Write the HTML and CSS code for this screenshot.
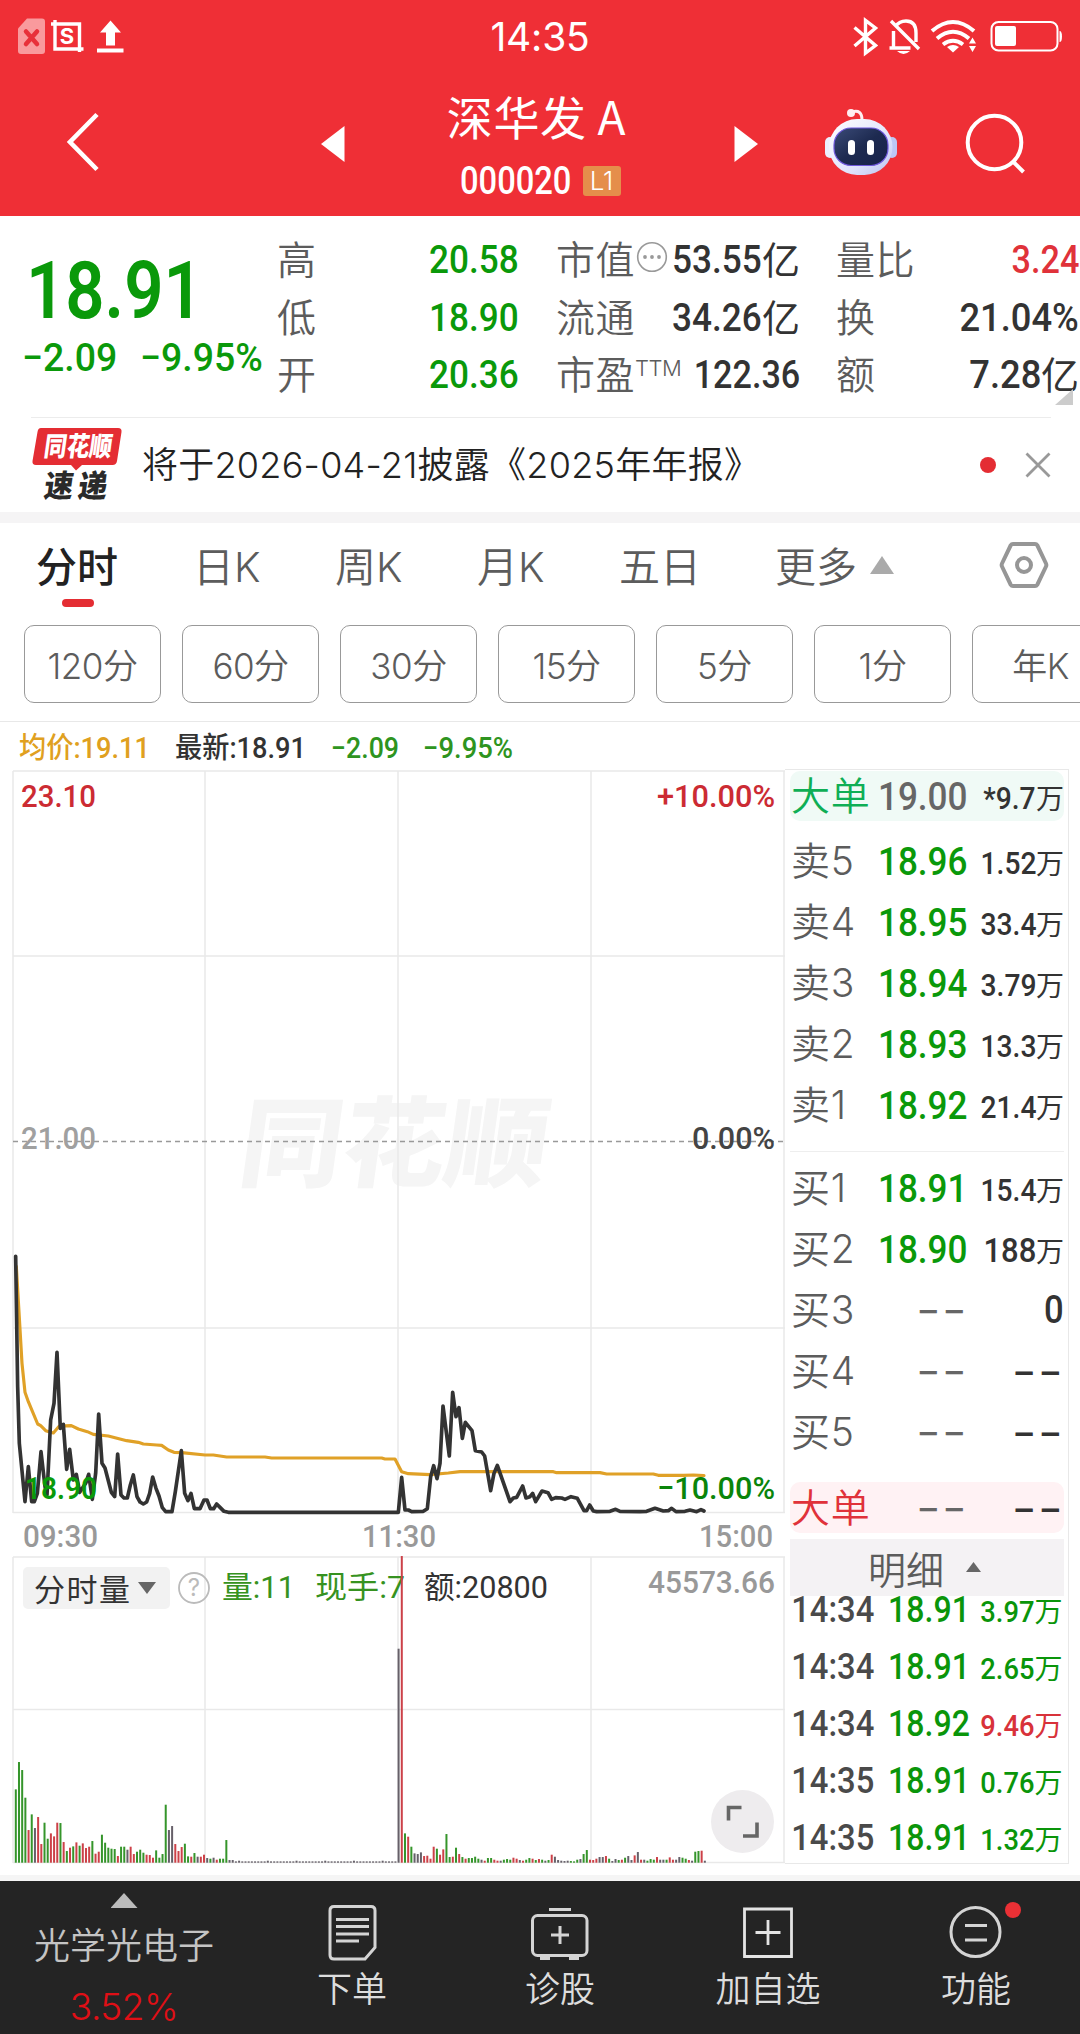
FILE: index.html
```html
<!DOCTYPE html>
<html lang="zh-CN">
<head>
<meta charset="utf-8">
<title>深华发A 000020</title>
<link rel="stylesheet" href="styles.css">
</head>
<body>
<header class="header">
  <div class="status">
    <svg class="status-left" width="110" height="40" viewBox="16 17 110 40">
      <path d="M27 18.500H42Q45 18.500 45 21.500V51Q45 54 42 54H21Q18 54 18 51V28.500Z" fill="#f99a9d"/>
      <path d="M26 31.500l11 12.500M37 31.500l-11 12.500" stroke="#e8303a" stroke-width="4.500" stroke-linecap="round"/>
      <path d="M51 24h28.500v28M55 20v29h28.500" fill="none" stroke="#fff" stroke-width="3.400"/>
      <text x="67" y="44" text-anchor="middle" class="crop-s">S</text>
      <path d="M110.500 20.500L121 32.500h-6V45.500h-9V32.500h-6ZM97 48.500h26.500v4H97z" fill="#fff"/>
    </svg>
    <span class="clock">14:35</span>
    <svg class="status-right" width="212" height="40" viewBox="852 17 212 40" fill="none" stroke="#fff" stroke-width="3.400">
      <path d="M854.500 27.500L875.500 45.500 865.500 53V20.500L875.500 28 854.500 46"/>
      <path d="M895 27q4-6 11-6 10 0 10 12v9M893.500 31v16M889.500 48h21M891 21l28 28"/>
      <path d="M897 51h13q-6.500 6-13 0z" fill="#fff" stroke="none"/>
      <path d="M932 31Q953 13 974 31M937 38.500Q953 25 969 38.500M943 44.500Q953 37 963 44.500" stroke-width="4"/>
      <path d="M947 47q6-4 12 0l-6 5.500zM969 43.500l3.500-6 3.500 6zM969 46l3.500 6 3.500-6z" fill="#fff" stroke="none"/>
      <rect x="991.500" y="22" width="66" height="28.500" rx="7" stroke-width="2"/>
      <rect x="995" y="26" width="21" height="20" rx="2" fill="#fff" stroke="none"/>
      <path d="M1059.500 31q2.500 0 2.500 5.500t-2.500 5.500z" fill="#fff" stroke="none"/>
    </svg>
  </div>
  <div class="titlebar">
    <svg class="back" width="36" height="60" viewBox="0 0 36 60" fill="none" stroke="#fff" stroke-width="4.600"><path d="M31 2.500L4 30l27 27.500"/></svg>
    <svg class="prev" width="26" height="38" viewBox="0 0 26 38"><path d="M1 19L24.500 1v36z" fill="#fff"/></svg>
    <div class="name-block">
      <h1 class="stock-name">深华发 A</h1>
      <div class="stock-code"><span class="code">000020</span><span class="level">L1</span></div>
    </div>
    <svg class="next" width="26" height="38" viewBox="0 0 26 38"><path d="M25 19L1.500 1v36z" fill="#fff"/></svg>
    <svg class="robot" width="74" height="70" viewBox="824 106 74 70">
      <defs>
        <linearGradient id="shell" x1="0" y1="0" x2="1" y2="1"><stop offset="0" stop-color="#fff"/><stop offset=".65" stop-color="#dfe2fb"/><stop offset="1" stop-color="#b9c2f0"/></linearGradient>
        <linearGradient id="visor" x1="0" y1="0" x2="1" y2="1"><stop offset="0" stop-color="#3b4b78"/><stop offset=".5" stop-color="#1d2a50"/><stop offset="1" stop-color="#18224a"/></linearGradient>
      </defs>
      <circle cx="851" cy="112" r="4" fill="#ffeef2"/>
      <path d="M852 111q10-3 10 8" fill="none" stroke="#ffeef2" stroke-width="3"/>
      <rect x="825" y="136" width="10" height="21" rx="5" fill="#eceffe"/>
      <rect x="887" y="136" width="10" height="21" rx="5" fill="#bcc6f5"/>
      <rect x="829" y="118" width="63.500" height="56" rx="28" fill="url(#shell)"/>
      <rect x="834" y="127" width="54" height="37.500" rx="17" fill="url(#visor)" stroke="#6f58dc" stroke-width="1.200"/>
      <rect x="848" y="139" width="7" height="15" rx="3.500" fill="#fff"/>
      <rect x="867" y="139" width="7" height="15" rx="3.500" fill="#fff"/>
    </svg>
    <svg class="search" width="62" height="64" viewBox="964 112 62 64" fill="none" stroke="#fff" stroke-width="4"><circle cx="994.500" cy="142.500" r="26.800"/><path d="M1013 161.500l10.500 10.500"/></svg>
  </div>
</header>

<section class="quote">
  <div class="quote-main">
    <div class="price"><span class="num">18.91</span></div>
    <div class="change"><span class="num">−2.09</span><span class="num">−9.95%</span></div>
  </div>
  <dl class="stats">
    <dt>高</dt><dd class="green"><span class="num">20.58</span></dd>
    <dt>低</dt><dd class="green"><span class="num">18.90</span></dd>
    <dt>开</dt><dd class="green"><span class="num">20.36</span></dd>
  </dl>
  <dl class="stats stats-mid">
    <dt>市值<svg class="more-dot" width="32" height="32" viewBox="0 0 32 32"><circle cx="16" cy="16" r="14.300" fill="none" stroke="#999" stroke-width="1.600"/><g fill="#999"><circle cx="9" cy="16" r="1.900"/><circle cx="16" cy="16" r="1.900"/><circle cx="23" cy="16" r="1.900"/></g></svg></dt><dd><span class="num">53.55</span>亿</dd>
    <dt>流通</dt><dd><span class="num">34.26</span>亿</dd>
    <dt>市盈<sup>TTM</sup></dt><dd><span class="num tight">122.36</span></dd>
  </dl>
  <dl class="stats stats-last">
    <dt>量比</dt><dd class="red"><span class="num tight">3.24</span></dd>
    <dt>换</dt><dd><span class="num">21.04%</span></dd>
    <dt>额</dt><dd><span class="num">7.28</span>亿</dd>
  </dl>
  <i class="corner"></i>
</section>

<section class="notice">
  <svg class="flash-logo" width="92" height="76" viewBox="31 426 92 76">
    <path d="M41 428h77q4 0 3.500 4l-4.500 29q-.600 4-4.500 4H82l-6 5.500-5-5.500H36q-4 0-3.500-4l5-29q.500-4 3.500-4z" fill="#e42d33"/>
    <text transform="translate(43 456) skewX(-8)" class="logo-a" textLength="68" lengthAdjust="spacingAndGlyphs">同花顺</text>
    <text transform="translate(43 497) skewX(-8)" class="logo-b" textLength="29" lengthAdjust="spacingAndGlyphs">速</text>
    <text transform="translate(77 497) skewX(-8)" class="logo-b" textLength="29" lengthAdjust="spacingAndGlyphs">递</text>
  </svg>
  <p class="notice-text">将于2026-04-21披露《2025年年报》</p>
  <i class="dot"></i>
  <svg class="close" width="26" height="26" viewBox="0 0 26 26" stroke="#999" stroke-width="2.800"><path d="M1.500 1.500l23 23M24.500 1.500l-23 23"/></svg>
</section>

<nav class="tabs">
  <a class="tab active">分时</a><a class="tab">日K</a><a class="tab">周K</a><a class="tab">月K</a><a class="tab">五日</a><a class="tab">更多<i class="up"></i></a>
  <svg class="gear" width="50" height="48" viewBox="0 0 50 48" fill="none" stroke="#969696" stroke-width="4"><path d="M14 3h22q1.500 0 2.300 1.300L47 22.500q.700 1.500 0 3L38.300 43.700Q37.500 45 36 45H14q-1.500 0-2.300-1.300L3 25.500q-.700-1.500 0-3L11.700 4.300Q12.500 3 14 3z"/><circle cx="25" cy="24" r="7"/></svg>
</nav>
<div class="periods">
  <span>120分</span><span>60分</span><span>30分</span><span>15分</span><span>5分</span><span>1分</span><span>年K</span>
</div>

<div class="legend">
  <svg width="520" height="44" viewBox="0 724 520 44">
    <g class="lg">
      <text x="19" y="758" textLength="131" lengthAdjust="spacingAndGlyphs" fill="#e0a020">均价:19.11</text>
      <text x="175" y="758" textLength="131" lengthAdjust="spacingAndGlyphs" fill="#333">最新:18.91</text>
      <text x="331" y="758" textLength="68" lengthAdjust="spacingAndGlyphs" fill="#2e9420">−2.09</text>
      <text x="423" y="758" textLength="90" lengthAdjust="spacingAndGlyphs" fill="#2e9420">−9.95%</text>
    </g>
  </svg>
</div>

<main class="board">
  <div class="charts">
    <svg class="chart" width="785" height="1099" viewBox="0 768 785 1099">
      <g class="watermark"><text transform="translate(236 1179) skewX(-8)" textLength="308" lengthAdjust="spacingAndGlyphs">同花顺</text></g>
      <g fill="none" stroke="#e9e9e9" stroke-width="1.500">
        <path d="M13 771H785M13 956H785M13 1328H785M13 1512.500H785M13 771V1513M205 771V1513M398 771V1513M591 771V1513M784 771V1513"/>
        <path d="M13 1557H785M13 1709.500H785M13 1862.500H785M13 1557V1863M205 1557V1863M398 1557V1863M591 1557V1863M784 1557V1863"/>
      </g>
      <path d="M13 1141.500H784" stroke="#999" stroke-width="1.600" stroke-dasharray="5 4"/>
      <g class="axis">
        <text x="21" y="807" textLength="75" lengthAdjust="spacingAndGlyphs" fill="#cc2b33">23.10</text>
        <text x="657" y="807" textLength="118" lengthAdjust="spacingAndGlyphs" fill="#cc2b33">+10.00%</text>
        <text x="21" y="1149" textLength="75" lengthAdjust="spacingAndGlyphs" fill="#a0a0a0">21.00</text>
        <text x="692" y="1149" textLength="83" lengthAdjust="spacingAndGlyphs" fill="#444">0.00%</text>
      </g>
      <g transform="translate(0 1230) scale(.33333)" fill="none" stroke-linejoin="round" stroke-linecap="round">
        <polyline stroke="#e0a127" stroke-width="9.500" points="49,110 56,230 66,400 75,487 85,515 113,582 122,587 137,602 160,609 178,588 214,587 235,597 262,605 280,613 325,618 380,632 415,637 430,642 470,645 485,646 505,660 522,667 545,668 615,675 640,675 680,681 795,681 815,684 1145,684 1155,687 1185,687 1205,725 1225,731 1290,734 1345,729 1380,725 1660,725 1670,728 1800,728 1820,732 1960,732 1975,736 2050,736 2080,735 2112,737"/>
        <polyline stroke="#333" stroke-width="11" points="47,79 53,470 58,640 75,815 85,710 95,815 103,815 112,790 123,665 135,770 141,795 152,570 162,520 171,367 181,595 190,583 200,718 209,658 220,750 229,733 239,787 257,760 266,733 277,808 287,730 296,552 306,700 315,714 334,787 344,800 353,672 363,795 372,804 382,804 391,765 400,735 411,800 420,816 430,822 440,816 449,790 458,741 468,775 477,798 487,833 497,845 516,845 526,785 544,662 554,790 564,812 573,790 583,836 600,836 612,810 621,810 631,836 641,836 650,822 660,832 672,844 685,847 1195,847 1205,742 1215,840 1225,840 1235,845 1270,844 1282,836 1292,740 1301,707 1311,746 1320,700 1329,528 1348,678 1358,487 1368,560 1377,533 1387,625 1396,577 1416,602 1426,662 1445,666 1454,678 1472,782 1482,730 1492,706 1530,815 1540,804 1550,802 1568,768 1578,804 1590,800 1598,790 1607,815 1626,783 1644,788 1655,808 1667,803 1685,804 1695,808 1713,800 1732,805 1752,842 1760,842 1769,825 1780,843 1790,845 1830,844 1847,838 1860,844 1920,845 1940,844 1965,835 1990,843 2005,842 2015,835 2028,845 2055,844 2070,840 2090,845 2103,839 2112,843"/>
      </g>
      <g class="axis">
        <text x="25" y="1499" textLength="72" lengthAdjust="spacingAndGlyphs" class="low" fill="#0a9a0a">18.90</text>
        <text x="657" y="1499" textLength="118" lengthAdjust="spacingAndGlyphs" fill="#0a850a">−10.00%</text>
        <g fill="#999">
          <text x="23" y="1547" textLength="75" lengthAdjust="spacingAndGlyphs">09:30</text>
          <text x="362" y="1547" textLength="74" lengthAdjust="spacingAndGlyphs">11:30</text>
          <text x="699" y="1547" textLength="74" lengthAdjust="spacingAndGlyphs">15:00</text>
          <text x="648" y="1593" textLength="127" lengthAdjust="spacingAndGlyphs">45573.66</text>
        </g>
      </g>
      <rect x="23" y="1567" width="147" height="42" rx="5" fill="#f2f2f2"/>
      <path d="M138 1582h18l-9 12z" fill="#666"/>
      <circle cx="194" cy="1588" r="15" fill="none" stroke="#bbb" stroke-width="1.800"/>
      <text x="194" y="1596" text-anchor="middle" class="help">?</text>
      <g class="vol-text">
        <text x="34" y="1601" textLength="96" fill="#333">分时量</text>
        <text x="222" y="1598" textLength="73" lengthAdjust="spacingAndGlyphs" fill="#369220">量:11</text>
        <text x="315" y="1598" textLength="90" lengthAdjust="spacingAndGlyphs" fill="#369220">现手:7</text>
        <text x="424" y="1598" textLength="124" lengthAdjust="spacingAndGlyphs" fill="#333">额:20800</text>
      </g>
      <g id="volume-bars"></g>
      <circle cx="742.500" cy="1821.500" r="31.500" fill="#eeecee"/>
      <path d="M741.500 1807.500h-13V1820.500M743 1836h14v-13.500" fill="none" stroke="#666" stroke-width="3.600"/>
    </svg>
  </div>

  <aside class="book">
    <div class="row big sell-big"><span class="lab">大单</span><span class="px grey"><b class="num">19.00</b></span><span class="qty"><b class="num">*9.7</b>万</span></div>
    <div class="group">
      <div class="row"><span class="lab">卖5</span><span class="px"><b class="num">18.96</b></span><span class="qty"><b class="num">1.52</b>万</span></div>
      <div class="row"><span class="lab">卖4</span><span class="px"><b class="num">18.95</b></span><span class="qty"><b class="num">33.4</b>万</span></div>
      <div class="row"><span class="lab">卖3</span><span class="px"><b class="num">18.94</b></span><span class="qty"><b class="num">3.79</b>万</span></div>
      <div class="row"><span class="lab">卖2</span><span class="px"><b class="num">18.93</b></span><span class="qty"><b class="num">13.3</b>万</span></div>
      <div class="row"><span class="lab">卖1</span><span class="px"><b class="num">18.92</b></span><span class="qty"><b class="num">21.4</b>万</span></div>
    </div>
    <div class="group buys">
      <div class="row"><span class="lab">买1</span><span class="px"><b class="num">18.91</b></span><span class="qty"><b class="num">15.4</b>万</span></div>
      <div class="row"><span class="lab">买2</span><span class="px"><b class="num">18.90</b></span><span class="qty whole"><b class="num">188</b>万</span></div>
      <div class="row"><span class="lab">买3</span><span class="px none">--</span><span class="qty zero"><b class="num">0</b></span></div>
      <div class="row"><span class="lab">买4</span><span class="px none">--</span><span class="qty none">--</span></div>
      <div class="row"><span class="lab">买5</span><span class="px none">--</span><span class="qty none">--</span></div>
    </div>
    <div class="row big buy-big"><span class="lab">大单</span><span class="px none">--</span><span class="qty none">--</span></div>
    <div class="detail-head">明细<i></i></div>
    <div class="trades">
      <div class="trade"><b class="num t">14:34</b><b class="num p">18.91</b><span class="q"><b class="num">3.97</b>万</span></div>
      <div class="trade"><b class="num t">14:34</b><b class="num p">18.91</b><span class="q"><b class="num">2.65</b>万</span></div>
      <div class="trade"><b class="num t">14:34</b><b class="num p">18.92</b><span class="q red"><b class="num">9.46</b>万</span></div>
      <div class="trade"><b class="num t">14:35</b><b class="num p">18.91</b><span class="q"><b class="num">0.76</b>万</span></div>
      <div class="trade"><b class="num t">14:35</b><b class="num p">18.91</b><span class="q"><b class="num">1.32</b>万</span></div>
    </div>
  </aside>
</main>

<footer class="bottom">
  <div class="sector"><i></i><span>光学光电子</span><b>3.52%</b></div>
  <div class="item"><svg width="60" height="60" viewBox="322 1903 60 60" fill="none" stroke="#d4d4d4" stroke-width="3"><path d="M334 1906.500h37q4 0 4 4v37l-10 11.500h-31q-4 0-4-4v-44.500q0-4 4-4z"/><path d="M336 1919.500h33M336 1926.500h33M336 1934h33M336 1941h23"/></svg><span>下单</span></div>
  <div class="item"><svg width="60" height="60" viewBox="530 1903 60 60" fill="none" stroke="#d4d4d4" stroke-width="3"><rect x="532.500" y="1915.500" width="54.500" height="40" rx="5"/><path d="M549 1909.500h22M560 1926v18M551 1935h18M540 1958.500h10M569 1958.500h10"/></svg><span>诊股</span></div>
  <div class="item"><svg width="60" height="60" viewBox="737 1903 60 60" fill="none" stroke="#e4e4e4" stroke-width="2.800"><path d="M743.500 1909h47v47.500h-47zM767 1920v25M754.500 1932.500h25"/></svg><span>加自选</span></div>
  <div class="item"><svg width="80" height="60" viewBox="936 1900 80 60" fill="none" stroke="#d4d4d4" stroke-width="3"><circle cx="975.500" cy="1932" r="24.500"/><path d="M965 1925.500h22M965 1940h22"/></svg><i class="badge"></i><span>功能</span></div>
</footer>
<script src="volume.js"></script>
</body>
</html>
```
FILE: volume.js
```javascript
// One bar per trading minute: height in thirds of a pixel, colour by direction.
const heights = [220,302,278,195,98,145,104,137,56,120,72,88,79,120,119,62,35,45,49,61,51,58,44,48,65,27,33,84,60,45,42,41,20,48,48,39,48,26,33,39,30,24,23,15,37,15,26,174,98,110,56,35,47,57,19,18,29,18,18,24,14,12,15,9,12,12,68,8,8];
while (heights.length < 120) heights.push(heights.length % 9 === 7 ? 6 : 4);
heights.push(642, 920, 88, 78, 48, 28, 26, 31, 20, 21, 12, 48, 42, 24, 40, 86, 17, 18, 45, 26, 17, 12, 14, 14, 18, 12, 9, 6, 14, 14, 9, 6, 6, 9, 11, 9, 15, 12, 8, 6, 9, 14, 12, 8, 11, 9, 6, 8, 24, 18, 8, 6, 5, 6, 5, 4, 9, 11, 26, 38, 9, 8, 12, 17, 17, 20, 12, 5, 11, 8, 9, 15, 20, 8, 22, 32, 9, 9, 6, 11, 9, 17, 9, 9, 9, 16, 9, 9, 17, 15, 12, 8, 6, 33, 35, 36, 6);
const morning = 'ggggrgkrrggrrrgrgrgrgrrrgrrgggggrggkrrgggrrrgggg' + 'kkrrrggrgkrrkgkrgggkk' + 'k'.repeat(52);
const afternoon = 'rgrgkkkrrrrgrrggrgrgrggggkrggrrkgggrrkrggrgrgkgrkkkkkgggkggrrrkkrgkkgrgkkrkrkgggrkkgrrkkggrk';
const dirs = morning + afternoon.padEnd(92, 'k').slice(0, 92) + 'ggrk';
const colors = { g: '#35952b', r: '#cc4148', k: '#666069' };
const layer = document.getElementById('volume-bars');
heights.forEach((h, i) => {
  const bar = document.createElementNS('http://www.w3.org/2000/svg', 'rect');
  bar.setAttribute('x', (14.8 + i * 3.19).toFixed(2));
  bar.setAttribute('y', (1862.700 - h / 3).toFixed(2));
  bar.setAttribute('width', '2');
  bar.setAttribute('height', (h / 3).toFixed(2));
  bar.setAttribute('fill', colors[dirs[i]]);
  layer.appendChild(bar);
});
```
FILE: styles.css
```css
* { box-sizing: border-box; margin: 0; padding: 0; }
body { width: 1080px; height: 2034px; overflow: hidden; background: #fff; color: #333; font-family: "Noto Sans CJK SC", sans-serif; }
svg { display: block; flex: none; }
i { font-style: normal; }
b { font-weight: 500; }
.num { display: inline-block; font-family: Roboto, sans-serif; font-weight: 500; transform: scaleX(.89); transform-origin: right center; white-space: pre; }
.green { color: #0a990a; }
.red { color: #e0323a; }

.header { height: 216px; background: #ef2f36; color: #fff; }
.status { display: flex; align-items: center; justify-content: space-between; height: 74px; padding: 0 16px; }
.status-left { margin-right: 102px; }
.clock { font: 400 39px/40px Inter, sans-serif; letter-spacing: -.2px; }
.crop-s { font: 700 22px Inter, sans-serif; fill: #fff; }
.titlebar { display: flex; align-items: center; height: 142px; }
.back { margin: -6px 0 0 66px; }
.prev { margin: -3px 0 0 218px; }
.name-block { width: 388px; height: 142px; padding-top: 10px; text-align: center; }
.stock-name { font-size: 46px; line-height: 62px; font-weight: 400; letter-spacing: .6px; padding-right: 7px; }
.stock-code { display: flex; align-items: center; justify-content: center; height: 38px; margin-top: 16px; padding-right: 0; }
.code { font: 500 38px/38px Roboto, sans-serif; width: 110px; transform: scaleX(.86); transform-origin: left center; }
.level { width: 38px; height: 30px; margin-left: 13px; border-radius: 3px; background: #e58e4b; font: 300 26px/30px Inter, sans-serif; }
.next { margin: -3px 0 0 -1px; }
.robot { margin: -7px 0 0 65px; }
.search { margin: -2px 0 0 66px; }

.quote { position: relative; display: flex; height: 201px; padding-top: 13px; }
.quote-main { width: 277px; color: #0a990a; }
.price { height: 102px; padding: 30px 0 0 26px; }
.price .num { font-size: 80px; line-height: 64px; font-weight: 600; transform: scaleX(.86); }
.price .num, .change .num { transform-origin: left center; }
.change { display: flex; padding: 7px 0 0 22px; font-size: 39px; line-height: 40px; }
.change .num { transform: scaleX(.96); }
.change .num:first-child { width: 118px; }
.stats { display: grid; grid-template-columns: auto minmax(0, 1fr); grid-auto-rows: 57.5px; width: 242px; align-content: start; line-height: 57px; }
.stats dt { display: flex; font-size: 39px; font-weight: 350; color: #5c5c5c; letter-spacing: .5px; white-space: nowrap; }
.stats dd { display: flex; justify-content: flex-end; font-size: 38px; white-space: nowrap; }
.stats .num { font-size: 39.500px; padding-top: 2px; }
.stats-mid { width: 244px; margin-left: 37px; }
.stats-last { width: 243px; margin-left: 36px; }
.stats-last .num { transform: scaleX(.92); }
.stats .num.tight { transform: scaleX(.865); }
.stats sup { font: 300 22px/22px Inter, sans-serif; margin-top: 13px; letter-spacing: -.5px; }
.more-dot { margin: 12px 0 0 1px; }
.corner { position: absolute; right: 7px; top: 173px; width: 18px; height: 16px; background: #ccc; clip-path: polygon(100% 0, 100% 100%, 0 100%); }

.notice { display: flex; align-items: center; height: 95px; margin-left: 31px; margin-right: 29px; border-top: 1.500px solid #ececec; }
.flash-logo { margin-top: -2px; }
.logo-a { font: 900 27px "Noto Sans CJK SC", sans-serif; fill: #fff; }
.logo-b { font: 900 31px "Noto Sans CJK SC", sans-serif; fill: #2a2a2a; }
.notice-text { flex: 1; margin-left: 19px; font: 350 36px/50px Inter, "Noto Sans CJK SC", sans-serif; letter-spacing: .25px; white-space: nowrap; color: #222; }
.dot { width: 16px; height: 16px; border-radius: 50%; background: #e42d33; margin-right: 29px; }

.tabs { display: flex; height: 112px; border-top: 11px solid #f5f4f5; padding-left: 36px; font: 350 41px/88px Inter, "Noto Sans CJK SC", sans-serif; color: #5c5c5c; white-space: nowrap; }
.tab { position: relative; width: 142px; }
.tab:nth-child(1) { width: 157px; }
.tab.active { color: #222; font-weight: 500; }
.tab.active::after { content: ""; position: absolute; left: 26px; top: 76px; width: 32px; height: 8px; border-radius: 4px; background: #e42d33; }
.tab:nth-child(5) { width: 156px; }
.tab:nth-child(6) { display: flex; width: 225px; }
.up { width: 24px; height: 18px; margin: 33px 0 0 13px; background: #aaa; clip-path: polygon(50% 0, 100% 100%, 0 100%); }
.gear { margin: 18px 0 0 -1px; }
.periods { display: flex; gap: 21px; height: 98px; padding: 1px 0 0 24px; overflow: hidden; border-bottom: 1.500px solid #e8e8e8; }
.periods span { flex: 0 0 137px; height: 78px; border: 1.500px solid #999; border-radius: 10px; text-align: center; font: 350 35px/80px Inter, "Noto Sans CJK SC", sans-serif; letter-spacing: -.5px; color: #5c5c5c; }
.legend { height: 46px; padding-top: 2px; }
.lg { font: 500 29px Roboto, "Noto Sans CJK SC", sans-serif; }

.board { display: flex; height: 1113px; border-bottom: 6px solid #f5f5f5; }
.charts { width: 785px; }
.axis { font: 500 32px Roboto, sans-serif; }
.axis .low { font-weight: 600; }
.watermark { font: 900 98px "Noto Sans CJK SC", sans-serif; fill: #f5f5f5; }
.help { font: 400 24px Inter, sans-serif; fill: #bbb; }
.vol-text { font: 400 31px Roboto, "Noto Sans CJK SC", sans-serif; }

.book { width: 284px; height: 1095px; margin-top: 1px; border: 1px solid #e8e8e8; border-left: 0; padding: 1px 4px 0 5px; overflow: hidden; }
.row { display: grid; grid-template-columns: 77px 94px 102px; align-items: center; height: 61px; padding-left: 1px; white-space: nowrap; }
.row > span { line-height: 50px; height: 50px; }
.row .lab { font: 350 39px/50px Inter, "Noto Sans CJK SC", sans-serif; color: #5c5c5c; letter-spacing: .8px; }
.px, .qty { text-align: right; }
.row .px { color: #0a990a; font-size: 39px; line-height: 44px; }
.px .num { transform: scaleX(.9); }
.row .grey { color: #666; }
.row .qty { color: #333; font-size: 28px; line-height: 52px; }
.qty .num { font-size: 31px; transform: scaleX(.91); }
.qty.whole .num { font-size: 33px; transform: scaleX(.94); }
.row .none { font: 400 39px/50px Inter, sans-serif; letter-spacing: 1px; color: #666; transform: scaleX(1.37); transform-origin: right center; }
.row .px.none { position: relative; left: 6px; color: #666; line-height: 50px; }
.row .qty.none { color: #333; font-weight: 500; font-size: 39px; line-height: 50px; }
.row .zero { line-height: 50px; }
.zero .num { font-size: 38px; }
.big { height: 50px; border-radius: 10px; }
.sell-big { background: #f0faf6; }
.sell-big .lab { color: #0fae55; }
.buy-big { height: 51px; margin-top: 20px; background: #fff2f4; }
.buy-big .lab { color: #e0323a; }
.group { margin-top: 9px; }
.buys { margin-top: 16px; border-top: 1.500px solid #eee; padding-top: 5px; }
.detail-head { display: flex; justify-content: center; height: 57px; margin-top: 6px; padding-right: 5px; background: #f4f2f4; font-size: 38px; line-height: 57px; font-weight: 350; color: #5c5c5c; }
.detail-head i { width: 15px; height: 10px; margin: 23px 0 0 22px; background: #666; clip-path: polygon(50% 0, 100% 100%, 0 100%); }
.trades { overflow: hidden; height: 265px; }
.trade { display: grid; grid-template-columns: 84.500px 95px 93px; height: 57px; line-height: 57px; font-size: 36px; white-space: nowrap; }
.trade:first-child { margin-top: -14px; }
.trade .t { color: #4a4a4a; justify-self: end; transform: scaleX(.91); }
.trade .p { color: #0a950a; justify-self: end; }
.q { text-align: right; font-size: 28px; color: #0a950a; }
.q.red { color: #d8323a; }
.q .num { font-size: 30px; transform: scaleX(.91); }

.bottom { display: grid; grid-template-columns: 248px repeat(4, 208px); height: 153px; background: #242424; color: #ddd; }
.sector, .item { position: relative; display: flex; flex-direction: column; align-items: center; font-size: 35px; font-weight: 350; line-height: 50px; }
.sector { color: #c4c4c4; }
.sector i { width: 27px; height: 15px; margin-top: 12px; background: #bbb; clip-path: polygon(50% 0, 100% 100%, 0 100%); }
.sector span { margin-top: 10px; font-size: 36px; }
.sector b { margin-top: 14px; color: #e00f16; font: 300 37px/50px Inter, sans-serif; letter-spacing: -.5px; }
.item svg { margin-top: 22px; }
.item span { margin-top: -1px; }
.item:last-child svg { margin-top: 19px; margin-bottom: 3px; }
.badge { position: absolute; left: 133px; top: 21px; width: 16px; height: 16px; border-radius: 50%; background: #ea3035; }
```
